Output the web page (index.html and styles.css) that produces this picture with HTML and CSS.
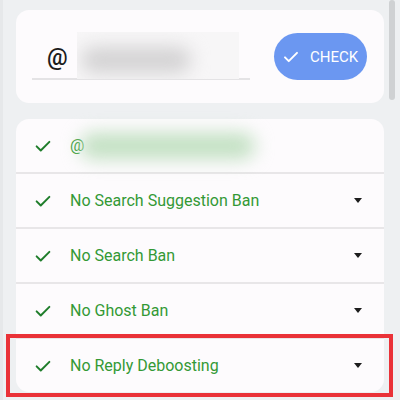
FILE: index.html
```html
<!DOCTYPE html>
<html>
<head>
<meta charset="utf-8">
<link rel="stylesheet" href="styles.css">
</head>
<body>
<div class="page">
  <div class="card search-card">
    <div class="field">
      <span class="at">@</span>
      <span class="blur-box"><span class="blur-blob"></span></span>
    </div>
    <button class="check-btn">
      <svg class="btn-icon" width="18" height="18" viewBox="0 0 24 24"><path d="M4 12.5l5 5L20 6.5" fill="none" stroke="#fff" stroke-width="2.6" stroke-linecap="round" stroke-linejoin="round"/></svg>
      <span>CHECK</span>
    </button>
  </div>

  <div class="card list-card">
    <div class="row">
      <svg class="tick" width="18" height="18" viewBox="0 0 24 24"><path d="M3.5 12.5l5.5 5.5L20.5 6.5" fill="none" stroke="#1f7d2b" stroke-width="2.6" stroke-linecap="round" stroke-linejoin="round"/></svg>
      <span class="label">@</span>
      <span class="green-blur"></span>
    </div>
    <div class="row">
      <svg class="tick" width="18" height="18" viewBox="0 0 24 24"><path d="M3.5 12.5l5.5 5.5L20.5 6.5" fill="none" stroke="#1f7d2b" stroke-width="2.6" stroke-linecap="round" stroke-linejoin="round"/></svg>
      <span class="label">No Search Suggestion Ban</span>
      <span class="caret"></span>
    </div>
    <div class="row">
      <svg class="tick" width="18" height="18" viewBox="0 0 24 24"><path d="M3.5 12.5l5.5 5.5L20.5 6.5" fill="none" stroke="#1f7d2b" stroke-width="2.6" stroke-linecap="round" stroke-linejoin="round"/></svg>
      <span class="label">No Search Ban</span>
      <span class="caret"></span>
    </div>
    <div class="row">
      <svg class="tick" width="18" height="18" viewBox="0 0 24 24"><path d="M3.5 12.5l5.5 5.5L20.5 6.5" fill="none" stroke="#1f7d2b" stroke-width="2.6" stroke-linecap="round" stroke-linejoin="round"/></svg>
      <span class="label">No Ghost Ban</span>
      <span class="caret"></span>
    </div>
    <div class="row highlighted">
      <svg class="tick" width="18" height="18" viewBox="0 0 24 24"><path d="M3.5 12.5l5.5 5.5L20.5 6.5" fill="none" stroke="#1f7d2b" stroke-width="2.6" stroke-linecap="round" stroke-linejoin="round"/></svg>
      <span class="label">No Reply Deboosting</span>
      <span class="caret"></span>
    </div>
  </div>
  <div class="scrollbar"></div>
</div>
</body>
</html>
```
FILE: styles.css
```css
* { box-sizing: border-box; }
html, body { margin: 0; padding: 0; }
body {
  background: #eef0f2;
  font-family: Roboto, "Noto Sans", sans-serif;
  width: 400px;
  height: 400px;
  overflow: hidden;
}
.page {
  position: relative;
  padding: 10px 16px 0 13px;
  display: flex;
  flex-direction: column;
  gap: 16px;
  height: 400px;
  border-left: 3px solid #e6e8ea;
}
.card {
  background: #fdfbfd;
  border-radius: 13px;
}
.search-card {
  height: 93px;
  display: flex;
  align-items: center;
  justify-content: space-between;
  padding: 0 17px 0 16px;
}
.field {
  width: 218px;
  height: 47px;
  border-bottom: 2px solid #e4e3e5;
  display: flex;
  align-items: center;
  padding-left: 15px;
  gap: 9px;
  position: relative;
}
.at {
  font-size: 23px;
  font-weight: 500;
  color: #1c1c1c;
  margin-top: 4px;
}
.blur-box {
  width: 162px;
  height: 47px;
  background: #f7f6f7;
  display: flex;
  align-items: center;
  padding-left: 4px;
  overflow: hidden;
}
.blur-blob {
  width: 110px;
  height: 26px;
  margin-top: 8px;
  background: #d3d2d3;
  border-radius: 13px;
  filter: blur(9px);
}
.check-btn {
  width: 93px;
  height: 47px;
  border: none;
  border-radius: 24px;
  background: #6b97f1;
  color: #fff;
  font-family: Roboto, sans-serif;
  font-size: 15px;
  display: flex;
  align-items: center;
  padding: 0 0 0 8px;
  gap: 10px;
}
.list-card {
  height: 273px;
  display: flex;
  flex-direction: column;
}
.row {
  height: 55px;
  flex: none;
  display: flex;
  align-items: center;
  padding-left: 18px;
  padding-right: 22px;
  border-bottom: 2px solid #e8e6e8;
  position: relative;
}
.row:last-child { border-bottom: none; height: 53px; }
.tick { flex: none; }
.label {
  margin-left: 18px;
  color: #339935;
  font-size: 16px;
  flex: 1;
}
.row:first-child .label { flex: none; }
.green-blur {
  width: 175px;
  height: 26px;
  margin-left: -4px;
  background: #c2e0c2;
  border-radius: 13px;
  filter: blur(9px);
}
.caret {
  width: 0;
  height: 0;
  border-left: 4.5px solid transparent;
  border-right: 4.5px solid transparent;
  border-top: 5px solid #1d1d1d;
}
.highlighted::after {
  content: "";
  position: absolute;
  left: -10px;
  right: -9px;
  top: -5px;
  bottom: -5px;
  border: 4px solid #ea3238;
}
.scrollbar {
  position: absolute;
  right: 5px;
  top: 0;
  width: 6px;
  height: 100px;
  border-radius: 3px;
  background: #cfd1d3;
}
```
